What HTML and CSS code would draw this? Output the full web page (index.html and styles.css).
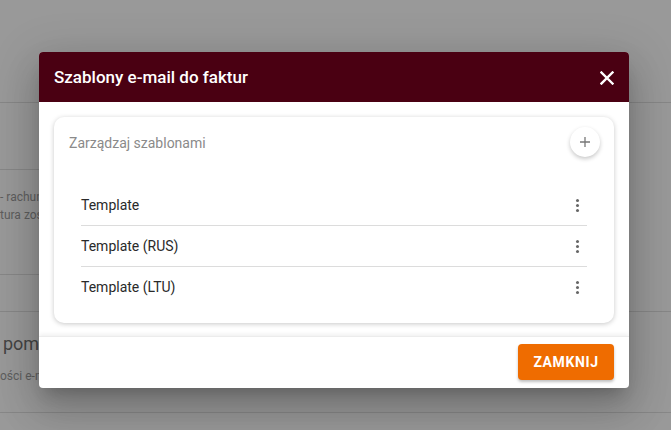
FILE: index.html
```html
<!DOCTYPE html>
<html lang="pl">
<head>
<meta charset="utf-8">
<title>Szablony e-mail do faktur</title>
<link rel="stylesheet" href="styles.css">
</head>
<body>
<div class="page">
  <div class="bg-row r1"></div>
  <div class="bg-row r2"></div>
  <div class="bg-row r3">
    <div class="bg-small">- rachunek</div>
    <div class="bg-small">tura zostanie</div>
  </div>
  <div class="bg-row r4"></div>
  <div class="bg-row r5">
    <div class="bg-big">pomoc</div>
    <div class="bg-small gap">ości e-mail</div>
  </div>
  <div class="bg-row r6"></div>
</div>

<div class="dialog">
  <div class="dlg-head">
    <span class="dlg-title">Szablony e-mail do faktur</span>
    <svg class="close" width="14" height="14" viewBox="0 0 14 14"><path d="M1.5 1.5 L12.5 12.5 M12.5 1.5 L1.5 12.5" stroke="#fff" stroke-width="2.4" stroke-linecap="square"/></svg>
  </div>
  <div class="dlg-body">
    <div class="card">
      <div class="card-head">
        <span class="card-title">Zarządzaj szablonami</span>
        <span class="add-btn"><svg width="12" height="12" viewBox="0 0 12 12"><path d="M6 1 V11 M1 6 H11" stroke="#777" stroke-width="1.3"/></svg></span>
      </div>
      <ul class="list">
        <li class="item"><span>Template</span><span class="kebab"><i></i><i></i><i></i></span></li>
        <li class="item"><span>Template (RUS)</span><span class="kebab"><i></i><i></i><i></i></span></li>
        <li class="item"><span>Template (LTU)</span><span class="kebab"><i></i><i></i><i></i></span></li>
      </ul>
    </div>
  </div>
  <div class="dlg-foot">
    <button class="btn-close">ZAMKNIJ</button>
  </div>
</div>
</body>
</html>
```
FILE: styles.css
```css
html, body {
  margin: 0;
  padding: 0;
}
body {
  width: 671px;
  height: 430px;
  overflow: hidden;
  background: #999999;
  font-family: Roboto, "Noto Sans", sans-serif;
  position: relative;
}
.page {
  display: flex;
  flex-direction: column;
}
.bg-row {
  border-bottom: 1px solid #878787;
  box-sizing: border-box;
}
.r1 { height: 103px; }
.r2 { height: 67px; margin-right: 120px; }
.r3 { height: 105px; margin-right: 120px; padding-top: 18px; }
.r4 { height: 37px; }
.r5 { height: 101px; padding-top: 19px; }
.r6 { height: 30px; border-bottom: none; }
.bg-small {
  font-size: 12px;
  line-height: 18px;
  color: #5e5e5e;
  white-space: nowrap;
}
.bg-small.gap { margin-top: 10px; }
.bg-big {
  font-size: 18px;
  line-height: 26px;
  color: #444;
  margin-left: 3px;
  white-space: nowrap;
}

.dialog {
  position: absolute;
  left: 39px;
  top: 52px;
  width: 590px;
  height: 336px;
  background: #fff;
  border-radius: 4px;
  overflow: hidden;
  box-shadow: 0 11px 15px -7px rgba(0,0,0,.2), 0 24px 38px 3px rgba(0,0,0,.14), 0 9px 46px 8px rgba(0,0,0,.12);
  display: flex;
  flex-direction: column;
}
.dlg-head {
  height: 50px;
  background: #4a0012;
  display: flex;
  align-items: center;
  justify-content: space-between;
  padding: 0 15px 0 15px;
  flex: none;
}
.dlg-title {
  color: #fff;
  font-size: 17px;
  font-weight: 500;
}
.close {
  display: block;
  margin-top: 1px;
}
.dlg-body {
  padding: 15px 15px 13px;
  flex: none;
}
.card {
  border-radius: 10px;
  box-shadow: 0 1px 5px rgba(0,0,0,.22);
  padding: 10px 14px 16px 15px;
}
.card-head {
  display: flex;
  align-items: center;
  justify-content: space-between;
  height: 30px;
}
.card-title {
  font-size: 14px;
  color: #8a8a8a;
  margin-top: 2px;
}
.add-btn {
  width: 30px;
  height: 30px;
  border-radius: 50%;
  background: #fff;
  box-shadow: 0 2px 4px rgba(0,0,0,.22);
  display: flex;
  align-items: center;
  justify-content: center;
}
.list {
  list-style: none;
  margin: 28px 13px 0 12px;
  padding: 0;
}
.item {
  height: 41px;
  display: flex;
  align-items: center;
  justify-content: space-between;
  font-size: 14px;
  color: #2a2a2a;
  border-bottom: 1px solid #dcdcdc;
  box-sizing: border-box;
}
.item:last-child { border-bottom: none; height: 40px; }
.kebab {
  display: flex;
  flex-direction: column;
  gap: 2px;
  margin-right: 8px;
}
.kebab i {
  width: 3px;
  height: 3px;
  border-radius: 50%;
  background: #666;
}
.dlg-foot {
  flex: 1;
  border-top: 1px solid #ececec;
  box-shadow: 0 -2px 4px rgba(0,0,0,.06);
  display: flex;
  justify-content: flex-end;
  align-items: flex-start;
  padding: 7px 15px 0 0;
}
.btn-close {
  width: 96px;
  height: 36px;
  border: none;
  border-radius: 4px;
  background: #ef6c00;
  color: #fff;
  font-family: Roboto, sans-serif;
  font-weight: 700;
  font-size: 14px;
  letter-spacing: 0.6px;
  box-shadow: 0 2px 3px rgba(0,0,0,.25);
  padding: 0;
}
```
